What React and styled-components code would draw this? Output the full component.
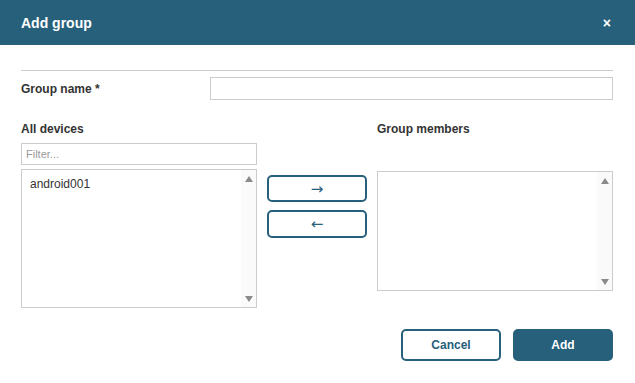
import styled, { createGlobalStyle } from "styled-components";

const GlobalStyle = createGlobalStyle`
  html, body {
    margin: 0;
    padding: 0;
    background: #fff;
    font-family: "Liberation Sans", Arial, sans-serif;
    color: #333;
  }
`;

const Dialog = styled.div`
  width: 635px;
  height: 383px;
  background: #fff;
`;

const Header = styled.div`
  height: 45px;
  background-color: #27607b;
  display: flex;
  align-items: center;
  justify-content: space-between;
  padding: 0 24px 0 21px;
  box-sizing: border-box;
`;

const Title = styled.h3`
  margin: 0;
  color: #fff;
  font-size: 14px;
  font-weight: 700;
`;

const Close = styled.button`
  border: 0;
  background: none;
  padding: 0;
  color: #fff;
  font-size: 14px;
  font-weight: 700;
  line-height: 1;
  font-family: inherit;
  cursor: pointer;
`;

const Body = styled.div`
  padding: 25px 22px 0 21px;
`;

const Divider = styled.hr`
  margin: 0;
  border: 0;
  border-top: 1px solid #ccc;
`;

const NameRow = styled.div`
  display: grid;
  grid-template-columns: 189px 1fr;
  align-items: center;
  margin-top: 6px;
`;

const Label = styled.label`
  font-size: 12px;
  font-weight: 700;
  color: #333;
`;

const TextInput = styled.input`
  height: 23px;
  box-sizing: border-box;
  border: 1px solid #ccc;
  padding: 0 4px;
  font-family: inherit;
  font-size: 11px;
  outline: none;
  &::placeholder {
    color: #999;
  }
`;

const Columns = styled.div`
  display: grid;
  grid-template-columns: 236px 100px 236px;
  column-gap: 10px;
  margin-top: 21px;
`;

const Column = styled.div`
  display: flex;
  flex-direction: column;
`;

const ColLabel = styled(Label)`
  height: 16px;
  line-height: 16px;
  margin-bottom: ${(p) => p.$gap}px;
`;

const FilterInput = styled(TextInput)`
  height: 22px;
  margin-bottom: 4px;
`;

const ListBox = styled.div`
  height: ${(p) => p.$h}px;
  box-sizing: border-box;
  border: 1px solid #ccc;
  display: flex;
`;

const Items = styled.div`
  flex: 1;
  padding: 7px 8px;
  font-size: 12px;
  color: #333;
`;

const Scroll = styled.div`
  width: 15px;
  background: #fafafa;
  display: flex;
  flex-direction: column;
  justify-content: space-between;
  align-items: center;
  padding: 6px 0 5px;
`;

const Tri = styled.span`
  width: 0;
  height: 0;
  border-left: 4px solid transparent;
  border-right: 4px solid transparent;
  ${(p) =>
    p.$down ? "border-top: 6px solid #8a8a8a;" : "border-bottom: 6px solid #8a8a8a;"}
`;

const Mover = styled.div`
  display: flex;
  flex-direction: column;
  gap: 8px;
  padding-top: 54px;
`;

const OutlineButton = styled.button`
  width: 100px;
  height: ${(p) => p.$h || 27}px;
  box-sizing: border-box;
  border: 2px solid #27607b;
  border-radius: 5px;
  background: #fff;
  color: #27607b;
  font-family: ${(p) => (p.$arrow ? '"DejaVu Sans", sans-serif' : "inherit")};
  font-size: ${(p) => (p.$arrow ? "15px" : "12px")};
  font-weight: ${(p) => (p.$arrow ? 400 : 700)};
  padding: 0;
  cursor: pointer;
`;

const SolidButton = styled(OutlineButton)`
  background: #27607b;
  color: #fff;
`;

const Footer = styled.div`
  display: flex;
  justify-content: flex-end;
  gap: 12px;
  margin-top: 21px;
`;

const App = () => {
  return (
    <>
      <GlobalStyle />
      <Dialog>
        <Header>
          <Title>Add group</Title>
          <Close>×</Close>
        </Header>
        <Body>
          <Divider />
          <NameRow>
            <Label>Group name *</Label>
            <TextInput type="text" />
          </NameRow>
          <Columns>
            <Column>
              <ColLabel $gap={6}>All devices</ColLabel>
              <FilterInput type="text" placeholder="Filter..." />
              <ListBox $h={139}>
                <Items>android001</Items>
                <Scroll>
                  <Tri />
                  <Tri $down />
                </Scroll>
              </ListBox>
            </Column>
            <Mover>
              <OutlineButton $arrow>→</OutlineButton>
              <OutlineButton $arrow $h={28}>←</OutlineButton>
            </Mover>
            <Column>
              <ColLabel $gap={34}>Group members</ColLabel>
              <ListBox $h={120}>
                <Items />
                <Scroll>
                  <Tri />
                  <Tri $down />
                </Scroll>
              </ListBox>
            </Column>
          </Columns>
          <Footer>
            <OutlineButton $h={32}>Cancel</OutlineButton>
            <SolidButton $h={32}>Add</SolidButton>
          </Footer>
        </Body>
      </Dialog>
    </>
  );
};

export default App;
